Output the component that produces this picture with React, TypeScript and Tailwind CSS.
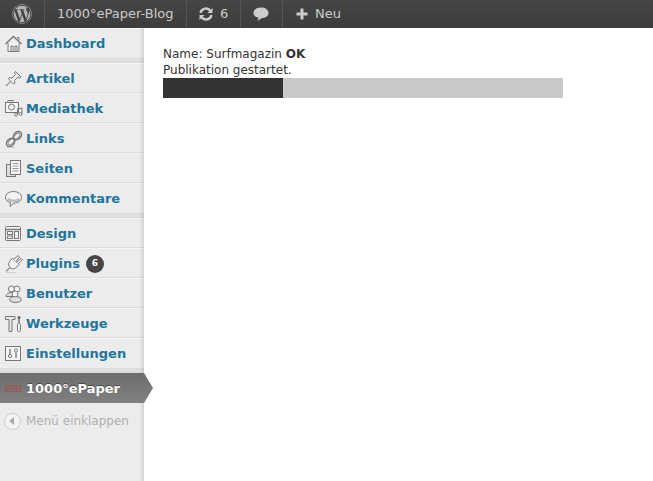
import type { ReactNode } from 'react';
import { FaWordpress } from 'react-icons/fa';

const stroke = { fill: 'none', stroke: '#777', strokeWidth: 1 };

const icons: Record<string, ReactNode> = {
  home: (
    <g {...stroke}>
      <path d="M1.5 10 L9.5 2.5 L17.5 10" strokeWidth={1.4} />
      <path d="M4 9 V17.5 H15 V9" fill="#f6f6f6" />
      <path d="M7 17 V12 H9 V17 M11 17 V12 H13 V17" />
      <path d="M13 3.5 H15 V6.5" />
    </g>
  ),
  pin: (
    <g {...stroke}>
      <path d="M11.5 2.5 L17 8 L15.5 9 L14 8 L10.5 11.5 L11 14 L9.5 15 L4.5 10 L5.5 8.5 L8 9 L11.5 5.5 L10.5 4 Z" fill="#eee" />
      <path d="M6.5 12.5 L2 17" stroke="#999" strokeWidth={1.5} />
    </g>
  ),
  media: (
    <g {...stroke}>
      <rect x="1.5" y="3.5" width="13" height="10" fill="#f4f4f4" />
      <rect x="4" y="1.5" width="5" height="2" fill="#ddd" />
      <circle cx="7.5" cy="8" r="3" />
      <circle cx="12" cy="15.5" r="1.5" fill="#ececec" />
      <circle cx="16.5" cy="15" r="1.5" fill="#ececec" />
      <path d="M13.5 15.5 V10 L18 9 V15" />
    </g>
  ),
  link: (
    <g fill="none">
      <path d="M6 14 L14 6" stroke="#888" strokeWidth={5} strokeLinecap="round" />
      <path d="M6 14 L14 6" stroke="#eee" strokeWidth={3} strokeLinecap="round" />
      <ellipse cx="6.5" cy="13.5" rx="4.5" ry="3.5" transform="rotate(-45 6.5 13.5)" stroke="#777" strokeWidth={1.5} />
      <ellipse cx="13.5" cy="6.5" rx="4.5" ry="3.5" transform="rotate(-45 13.5 6.5)" stroke="#777" strokeWidth={1.5} />
      <path d="M3 18.5 H11" stroke="#ccc" />
    </g>
  ),
  pages: (
    <g {...stroke}>
      <rect x="2.5" y="5.5" width="9" height="12" fill="#ddd" />
      <rect x="6.5" y="1.5" width="10" height="14" fill="#f6f6f6" />
      <path d="M8.5 4.5 H14.5 M8.5 7 H14.5 M8.5 9.5 H14.5 M8.5 12 H14.5" stroke="#999" />
    </g>
  ),
  comment: (
    <g {...stroke}>
      <path d="M9.5 2.5 C14 2.5 17.5 5 17.5 8.5 C17.5 12 14 14 10 14 L6 17.5 L6.5 13.5 C3.5 13 1.5 11 1.5 8.5 C1.5 5 5 2.5 9.5 2.5 Z" fill="#f2f2f2" />
      <path d="M4 10 C7 12.5 13 12.5 15.5 10" stroke="#bbb" strokeWidth={2.5} />
    </g>
  ),
  design: (
    <g {...stroke}>
      <rect x="1.5" y="2.5" width="15" height="14" rx="1" fill="#f4f4f4" />
      <path d="M1.5 5.5 H16.5" strokeWidth={1.5} />
      <rect x="3.5" y="7.5" width="5" height="3" />
      <rect x="3.5" y="12" width="5" height="2.5" />
      <rect x="10.5" y="7.5" width="4" height="7" />
    </g>
  ),
  plugin: (
    <g {...stroke}>
      <path d="M8.5 4 L15 10.5 L11.5 14 C9.5 15.5 7.5 15 6 13.5 C4.5 12 4 10 5.5 7.5 Z" fill="#f2f2f2" />
      <path d="M9.5 5.5 L14 1.5 L15.5 3 L12 7.5 M12.5 8.5 L17 4.5 L18.5 6 L14 10" fill="#f6f6f6" />
      <path d="M6 13.5 L2 17.5" stroke="#999" strokeWidth={1.6} />
      <path d="M2 18.5 H12" stroke="#ccc" />
    </g>
  ),
  users: (
    <g {...stroke}>
      <circle cx="7.5" cy="5" r="3" fill="#f4f4f4" />
      <circle cx="13" cy="5" r="3" fill="#f4f4f4" />
      <path d="M2 12.5 C2 9.5 5 8.5 7 8.5 C9 8.5 11 9.5 11 12.5 Z" fill="#ddd" />
      <circle cx="11" cy="10" r="3" fill="#f8f8f8" />
      <ellipse cx="11.5" cy="15.5" rx="6" ry="3" fill="#ddd" />
    </g>
  ),
  tools: (
    <g {...stroke}>
      <path d="M1.5 2.5 H11 V5.5 H8 V17.5 H5 V5.5 H1.5 Z" fill="#e8e8e8" />
      <circle cx="15" cy="3.5" r="1.5" fill="#666" stroke="none" />
      <path d="M15 5 V9" strokeWidth={1.5} />
      <rect x="13.5" y="9.5" width="3" height="8" rx="1" fill="#f4f4f4" />
    </g>
  ),
  settings: (
    <g {...stroke}>
      <rect x="1.5" y="2.5" width="15" height="14" fill="#f6f6f6" />
      <circle cx="6" cy="12" r="1.6" />
      <path d="M6 5 V10" strokeWidth={1.4} />
      <circle cx="12" cy="6.5" r="1.6" />
      <path d="M12 8.5 V14" strokeWidth={1.4} />
    </g>
  ),
};

function MenuItem({ icon, label, badge, last }: { icon: string; label: string; badge?: string; last?: boolean }) {
  return (
    <div className={`flex h-[30px] items-center border-t border-t-[#f5f5f5] ${last ? '' : 'border-b border-b-[#dcdcdc] pt-[1px]'}`}>
      <svg width="20" height="20" viewBox="0 0 20 20" className="ml-[4px] mr-[2px] shrink-0">{icons[icon]}</svg>
      <span className="text-[13px] font-bold text-[#21759b]">{label}</span>
      {badge && (
        <span className="ml-[6px] flex h-[18px] w-[18px] items-center justify-center rounded-full bg-[#464646] text-[9px] font-bold text-white">{badge}</span>
      )}
    </div>
  );
}

function Separator() {
  return <div className="h-[5px] border-y border-y-[#dcdcdc] bg-[#dfdfdf]" />;
}

function BarItem({ children, className }: { children: ReactNode; className: string }) {
  return <div className={`flex h-full items-center border-r border-r-[#555] text-[13px] text-[#ccc] ${className}`}>{children}</div>;
}

export default function App() {
  return (
    <div className="flex h-[481px] w-[653px] flex-col overflow-hidden bg-white font-['DejaVu_Sans',sans-serif]">
      {/* Admin bar */}
      <div className="flex h-[28px] shrink-0 items-center bg-gradient-to-b from-[#464646] to-[#3c3c3c]">
        <div className="flex h-full w-[45px] items-center justify-center border-r border-r-[#555] pr-px">
          <FaWordpress className="h-[20px] w-[20px] text-[#b4b4b4]" />
        </div>
        <BarItem className="w-[142px] pl-[12px]">1000°ePaper-Blog</BarItem>
        <BarItem className="w-[54px] pl-[11px]">
          <svg width="16" height="16" viewBox="0 0 16 16" fill="none" stroke="#ccc" strokeWidth="2.4" className="mr-[6px]">
            <path d="M2.5 7 A5.5 5.5 0 0 1 12.5 5" />
            <path d="M13.5 9 A5.5 5.5 0 0 1 3.5 11" />
            <path d="M14.5 2 V7 H9.5 Z M1.5 14 V9 H6.5 Z" fill="#ccc" stroke="none" />
          </svg>
          6
        </BarItem>
        <BarItem className="w-[42px] pl-[12px]">
          <svg width="16" height="16" viewBox="0 0 16 16" fill="#ccc">
            <path d="M8 1.5 C12 1.5 15.5 3.5 15.5 7 C15.5 10.5 12 12 9 12 L4.5 15 L5.5 11.5 C2.5 11 0.5 9.5 0.5 7 C0.5 3.5 4 1.5 8 1.5 Z" />
          </svg>
        </BarItem>
        <BarItem className="w-[72px] border-r-0 pl-[13px]">
          <svg width="12" height="12" viewBox="0 0 12 12" fill="#ccc" className="mr-[7px]">
            <path d="M4.5 0.5 H7.5 V4.5 H11.5 V7.5 H7.5 V11.5 H4.5 V7.5 H0.5 V4.5 H4.5 Z" />
          </svg>
          Neu
        </BarItem>
      </div>

      <div className="flex min-h-0 flex-1">
        {/* Sidebar */}
        <div className="relative w-[144px] shrink-0 bg-[#ececec]">
          <MenuItem icon="home" label="Dashboard" last />
          <Separator />
          <MenuItem icon="pin" label="Artikel" />
          <MenuItem icon="media" label="Mediathek" />
          <MenuItem icon="link" label="Links" />
          <MenuItem icon="pages" label="Seiten" />
          <MenuItem icon="comment" label="Kommentare" last />
          <Separator />
          <MenuItem icon="design" label="Design" />
          <MenuItem icon="plugin" label="Plugins" badge="6" />
          <MenuItem icon="users" label="Benutzer" />
          <MenuItem icon="tools" label="Werkzeuge" />
          <MenuItem icon="settings" label="Einstellungen" last />
          <Separator />
          <div className="relative z-10 flex h-[30px] items-center bg-gradient-to-b from-[#6d6d6d] to-[#808080] pt-[1px]">
            <svg width="20" height="20" viewBox="0 0 20 20" className="ml-[4px] mr-[2px] shrink-0">
              <rect x="1.5" y="6.5" width="15" height="6" fill="none" stroke="#b8403c" strokeDasharray="2 1" />
              <path d="M4 8 V11 M7 8 V11 M10 8 V11 M13 8 V11" stroke="#b8403c" />
            </svg>
            <span className="text-[13px] font-bold text-white [text-shadow:0_-1px_0_rgba(0,0,0,0.4)]">1000°ePaper</span>
            <div className="absolute left-full top-0 h-[30px] w-[9px] bg-gradient-to-b from-[#6d6d6d] to-[#808080] [clip-path:polygon(0_0,100%_50%,0_100%)]" />
          </div>
          <div className="mt-[5px] flex h-[25px] items-center pt-[1px]">
            <span className="ml-[4px] flex h-[17px] w-[17px] items-center justify-center rounded-full border border-[#ccc] bg-[#f4f4f4]">
              <span className="mr-[2px] h-0 w-0 border-y-[4px] border-r-[5px] border-y-transparent border-r-[#aaa]" />
            </span>
            <span className="ml-[5px] text-[12px] text-[#b0b0b0]">Menü einklappen</span>
          </div>
          {/* inner edge shadow */}
          <div className="pointer-events-none absolute inset-y-0 right-0 w-[5px] bg-gradient-to-r from-transparent to-black/10" />
        </div>

        {/* Content */}
        <div className="pl-[19px] pt-[18px] text-[12px] leading-[16px] text-[#333]">
          <div>Name: Surfmagazin <b>OK</b></div>
          <div>Publikation gestartet.</div>
          <div className="h-[20px] w-[400px] bg-[#c9c9c9]">
            <div className="h-full w-[120px] bg-[#333]" />
          </div>
        </div>
      </div>
    </div>
  );
}
